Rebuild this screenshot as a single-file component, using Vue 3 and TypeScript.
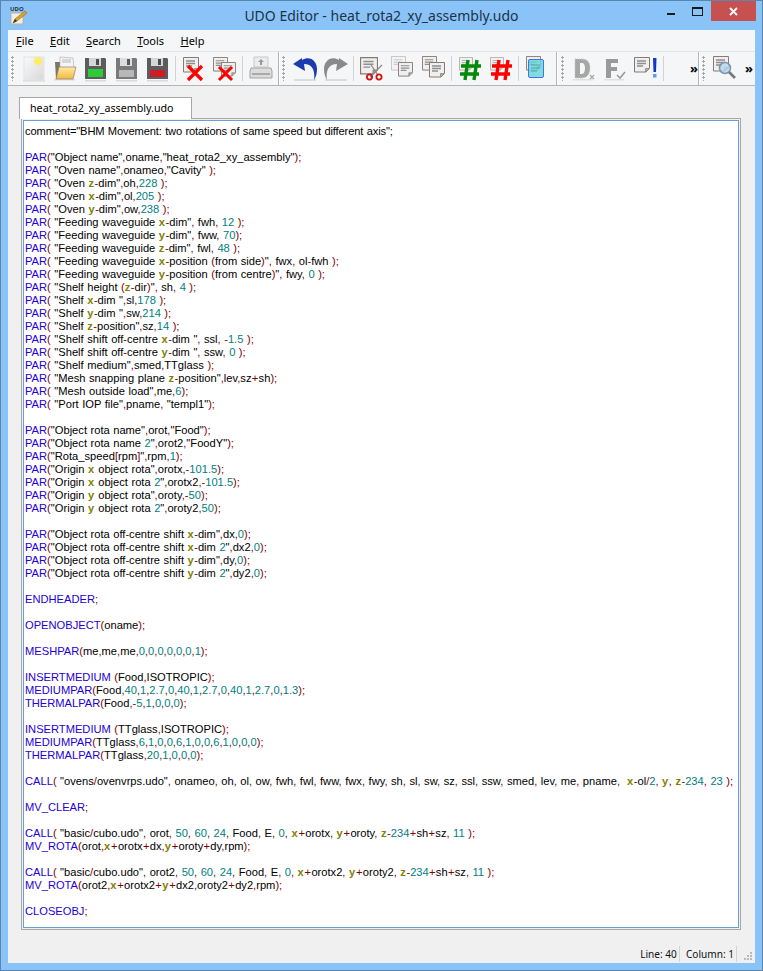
<script setup lang="ts">
const source = `comment="BHM Movement: two rotations of same speed but different axis";

PAR("Object name",oname,"heat_rota2_xy_assembly");
PAR( "Oven name",onameo,"Cavity" );
PAR( "Oven z-dim",oh,228 );
PAR( "Oven x-dim",ol,205 );
PAR( "Oven y-dim",ow,238 );
PAR( "Feeding waveguide x-dim", fwh, 12 );
PAR( "Feeding waveguide y-dim", fww, 70);
PAR( "Feeding waveguide z-dim", fwl, 48 );
PAR( "Feeding waveguide x-position (from side)", fwx, ol-fwh );
PAR( "Feeding waveguide y-position (from centre)", fwy, 0 );
PAR( "Shelf height (z-dir)", sh, 4 );
PAR( "Shelf x-dim ",sl,178 );
PAR( "Shelf y-dim ",sw,214 );
PAR( "Shelf z-position",sz,14 );
PAR( "Shelf shift off-centre x-dim ", ssl, -1.5 );
PAR( "Shelf shift off-centre y-dim ", ssw, 0 );
PAR( "Shelf medium",smed,TTglass );
PAR( "Mesh snapping plane z-position",lev,sz+sh);
PAR( "Mesh outside load",me,6);
PAR( "Port IOP file",pname, "templ1");

PAR("Object rota name",orot,"Food");
PAR("Object rota name 2",orot2,"FoodY");
PAR("Rota_speed[rpm]",rpm,1);
PAR("Origin x object rota",orotx,-101.5);
PAR("Origin x object rota 2",orotx2,-101.5);
PAR("Origin y object rota",oroty,-50);
PAR("Origin y object rota 2",oroty2,50);

PAR("Object rota off-centre shift x-dim",dx,0);
PAR("Object rota off-centre shift x-dim 2",dx2,0);
PAR("Object rota off-centre shift y-dim",dy,0);
PAR("Object rota off-centre shift y-dim 2",dy2,0);

ENDHEADER;

OPENOBJECT(oname);

MESHPAR(me,me,me,0,0,0,0,0,0,1);

INSERTMEDIUM (Food,ISOTROPIC);
MEDIUMPAR(Food,40,1,2.7,0,40,1,2.7,0,40,1,2.7,0,1.3);
THERMALPAR(Food,-5,1,0,0,0);

INSERTMEDIUM (TTglass,ISOTROPIC);
MEDIUMPAR(TTglass,6,1,0,0,6,1,0,0,6,1,0,0,0);
THERMALPAR(TTglass,20,1,0,0,0);

CALL( "ovens/ovenvrps.udo", onameo, oh, ol, ow, fwh, fwl, fww, fwx, fwy, sh, sl, sw, sz, ssl, ssw, smed, lev, me, pname,  x-ol/2, y, z-234, 23 );

MV_CLEAR;

CALL( "basic/cubo.udo", orot, 50, 60, 24, Food, E, 0, x+orotx, y+oroty, z-234+sh+sz, 11 );
MV_ROTA(orot,x+orotx+dx,y+oroty+dy,rpm);

CALL( "basic/cubo.udo", orot2, 50, 60, 24, Food, E, 0, x+orotx2, y+oroty2, z-234+sh+sz, 11 );
MV_ROTA(orot2,x+orotx2+y+dx2,oroty2+dy2,rpm);

CLOSEOBJ;`

interface Token {
  text: string
  kind: string
}

const keywords = new Set([
  'PAR', 'ENDHEADER', 'OPENOBJECT', 'MESHPAR', 'INSERTMEDIUM', 'MEDIUMPAR',
  'THERMALPAR', 'CALL', 'MV_CLEAR', 'MV_ROTA', 'CLOSEOBJ',
])

function tokenize(line: string): Token[] {
  if (line.startsWith('comment')) return [{ text: line, kind: 'comment' }]
  const parts = line.match(/[A-Za-z_][A-Za-z_0-9]*|\d+(?:\.\d+)?|\s+|./g) ?? []
  return parts.map((text) => {
    if (keywords.has(text)) return { text, kind: 'kw' }
    if (text === 'x' || text === 'y' || text === 'z') return { text, kind: 'axis' }
    if (/^\d/.test(text)) return { text, kind: 'num' }
    if (text === '+') return { text, kind: 'op plus' }
    if (/^[()\[\],;\-/=]$/.test(text)) return { text, kind: 'op' }
    return { text, kind: 'plain' }
  })
}

const lines = source.split('\n').map(tokenize)
const menus = [
  { key: 'F', rest: 'ile' },
  { key: 'E', rest: 'dit' },
  { key: 'S', rest: 'earch' },
  { key: 'T', rest: 'ools' },
  { key: 'H', rest: 'elp' },
]
</script>

<template>
  <div class="window">
    <svg class="defs" width="0" height="0" aria-hidden="true">
      <defs>
        <linearGradient id="pageFill" x1="0" y1="0" x2="1" y2="1">
          <stop offset="0" stop-color="#fafafa" />
          <stop offset="1" stop-color="#d8d8d8" />
        </linearGradient>
        <linearGradient id="folderFill" x1="0" y1="0" x2="0" y2="1">
          <stop offset="0" stop-color="#ffe9a8" />
          <stop offset="1" stop-color="#f6b83c" />
        </linearGradient>
        <symbol id="doc" viewBox="0 0 16 16">
          <path d="M.5.5h15v11l-3.500 3.500H.5z" fill="#efefef" stroke="#8d786e" />
          <path d="M3 4h9M3 6.500h9M3 9h6" stroke="#8e8e8e" stroke-width="1.300" />
          <path d="M11.500 15v-3.500H15" fill="#aaa" stroke="#8d786e" stroke-width=".7" />
        </symbol>
        <symbol id="disk" viewBox="0 0 24 24">
          <path d="M1 1h20l1 1v20H1z" fill="#5c5c5c" />
          <rect x="5" y="1" width="12" height="8" fill="#d6d6d6" />
          <rect x="12" y="2" width="3" height="6" fill="#4c4c4c" />
        </symbol>
      </defs>
    </svg>

    <header class="titlebar">
      <svg class="appicon" width="18" height="22" viewBox="0 0 18 22" aria-hidden="true">
        <path d="M1 8h12v11H1z" fill="#f2f0e6" stroke="#b9b39c" />
        <path d="M3 18l2-4L15 6l2 2L7 16z" fill="#d9a52c" stroke="#8a6a1a" stroke-width=".6" />
        <path d="M3 18l2-4 2 2z" fill="#333" />
      </svg>
      <span class="appmark">UDO</span>
      <h1 class="title">UDO Editor - heat_rota2_xy_assembly.udo</h1>
      <div class="controls">
        <span class="min"></span>
        <span class="max"></span>
        <span class="close">
          <svg width="9" height="9" viewBox="0 0 9 9" aria-hidden="true">
            <path d="M1 1l7 7M8 1L1 8" stroke="#fff" stroke-width="1.800" />
          </svg>
        </span>
      </div>
    </header>

    <div class="client">
      <nav class="menubar">
        <span v-for="m in menus" :key="m.key" class="menu"><u>{{ m.key }}</u>{{ m.rest }}</span>
      </nav>

      <div class="toolbar">
        <div class="group g1">
          <i class="grip"></i>
          <span class="btn">
            <svg width="24" height="26" viewBox="0 0 24 26" aria-hidden="true">
              <rect x="1" y="24" width="22" height="1.500" fill="#dadada" />
              <rect x="2" y="1" width="20" height="23" fill="url(#pageFill)" stroke="#e4e4e4" />
              <circle cx="16" cy="5" r="4.500" fill="#ffe94a" opacity=".55" />
              <circle cx="16" cy="5" r="2.600" fill="#fff04a" />
            </svg>
          </span>
          <span class="btn">
            <svg width="24" height="26" viewBox="0 0 24 26" aria-hidden="true">
              <rect x="1" y="23" width="21" height="1.500" fill="#dadada" />
              <path d="M2 6h6l1-2h4v19H3z" fill="#7d7468" />
              <path d="M7 1l13 1 1 10H7z" fill="#f5f5f5" stroke="#a8a8a8" stroke-width=".6" />
              <path d="M9 4h9M9 6h9" stroke="#b8b8b8" />
              <path d="M6 11h17l-3 12H3z" fill="url(#folderFill)" stroke="#8c8070" stroke-width=".7" />
            </svg>
          </span>
          <span class="btn">
            <svg width="24" height="26" viewBox="0 0 24 26" aria-hidden="true">
              <rect x="1" y="24" width="21" height="1.500" fill="#dadada" />
              <use href="#disk" width="24" height="24" x="0" y="1" />
              <rect x="4" y="13" width="15" height="8" fill="#2ecb36" />
            </svg>
          </span>
          <span class="btn">
            <svg width="24" height="26" viewBox="0 0 24 26" aria-hidden="true">
              <rect x="1" y="24" width="21" height="1.500" fill="#dadada" />
              <path d="M1 2h20l1 1v20H1z" fill="#7a7a7a" />
              <rect x="5" y="2" width="12" height="8" fill="#dedede" />
              <rect x="12" y="3" width="3" height="6" fill="#5a5a5a" />
              <rect x="4" y="14" width="15" height="7" fill="#b8b8b8" />
            </svg>
          </span>
          <span class="btn">
            <svg width="24" height="26" viewBox="0 0 24 26" aria-hidden="true">
              <rect x="1" y="24" width="21" height="1.500" fill="#dadada" />
              <use href="#disk" width="24" height="24" x="0" y="1" />
              <rect x="4" y="14" width="15" height="7" fill="#cf1c24" />
            </svg>
          </span>
          <i class="sep"></i>
          <span class="btn">
            <svg width="24" height="26" viewBox="0 0 24 26" aria-hidden="true">
              <use href="#doc" x="1" y="1" width="16" height="16" />
              <path d="M6 10l14 14M20 10L6 24" stroke="#f00" stroke-width="3.200" />
            </svg>
          </span>
          <span class="btn">
            <svg width="24" height="26" viewBox="0 0 24 26" aria-hidden="true">
              <use href="#doc" x="0" y="1" width="15" height="15" />
              <use href="#doc" x="8" y="6" width="15" height="15" />
              <path d="M6 11l13 13M19 11L6 24" stroke="#f00" stroke-width="3" />
            </svg>
          </span>
          <i class="sep"></i>
          <span class="btn">
            <svg width="24" height="26" viewBox="0 0 24 26" aria-hidden="true">
              <path d="M5 1h14v10H5z" fill="#ececec" stroke="#c8c8c8" />
              <path d="M12 3l3 3h-2v3h-2V6H9z" fill="#9a9a9a" />
              <path d="M2 12h20l1 3v7H1v-7z" fill="#dcdcdc" stroke="#a4a4a4" />
              <rect x="3" y="17" width="18" height="2" fill="#aaa" />
            </svg>
          </span>
        </div>

        <div class="group g2">
          <i class="grip"></i>
          <span class="btn">
            <svg width="26" height="28" viewBox="0 0 26 28" aria-hidden="true">
              <rect x="2" y="24" width="22" height="2" fill="#dcdcdc" />
              <path d="M1 9L10 3v2C18 0 25 6 25 14c0 4-1 8-3 11 1-7 0-16-10-16l1 7z" fill="#1c3cae" />
            </svg>
          </span>
          <span class="btn">
            <svg width="26" height="28" viewBox="0 0 26 28" aria-hidden="true">
              <rect x="2" y="24" width="22" height="2" fill="#dcdcdc" />
              <path d="M25 9L16 3v2C8 0 1 6 1 14c0 4 1 8 3 11-1-7 0-16 10-16l-1 7z" fill="#8a8a8a" />
            </svg>
          </span>
          <i class="sep"></i>
          <span class="btn">
            <svg width="24" height="26" viewBox="0 0 24 26" aria-hidden="true">
              <use href="#doc" x="0" y="1" width="18" height="18" />
              <path d="M22 9l-12 12M11 9l7 10" stroke="#8a8a8a" stroke-width="1.300" />
              <circle cx="9.500" cy="21" r="2.600" fill="none" stroke="#d01414" stroke-width="1.800" />
              <circle cx="19" cy="21" r="2.600" fill="none" stroke="#d01414" stroke-width="1.800" />
            </svg>
          </span>
          <span class="btn">
            <svg width="24" height="26" viewBox="0 0 24 26" aria-hidden="true">
              <g opacity=".4"><use href="#doc" x="0" y="0" width="15" height="15" /></g>
              <use href="#doc" x="7" y="6" width="15" height="15" />
            </svg>
          </span>
          <span class="btn">
            <svg width="24" height="26" viewBox="0 0 24 26" aria-hidden="true">
              <use href="#doc" x="0" y="0" width="15" height="15" />
              <use href="#doc" x="7" y="6" width="16" height="16" />
            </svg>
          </span>
          <i class="sep"></i>
          <span class="btn">
            <svg width="24" height="26" viewBox="0 0 24 26" aria-hidden="true">
              <g opacity=".6"><use href="#doc" x="1" y="1" width="14" height="14" /></g>
              <path d="M10 4L7 24M19 4l-3 20M3 10h20M2 18h19" stroke="#068a0a" stroke-width="3.400" />
            </svg>
          </span>
          <span class="btn">
            <svg width="24" height="26" viewBox="0 0 24 26" aria-hidden="true">
              <g opacity=".6"><use href="#doc" x="1" y="1" width="14" height="14" /></g>
              <path d="M10 4L7 24M19 4l-3 20M3 10h20M2 18h19" stroke="#f00" stroke-width="3.400" />
            </svg>
          </span>
          <i class="sep"></i>
          <span class="btn">
            <svg width="24" height="26" viewBox="0 0 24 26" aria-hidden="true">
              <use href="#doc" x="1" y="0" width="15" height="15" />
              <rect x="3.500" y="3.500" width="15" height="18" rx="1.500" fill="#5ed8d8" fill-opacity=".8" stroke="#4a6ef0" />
              <path d="M6 9h9M6 12h9M6 15h6" stroke="#5aa0a8" />
            </svg>
          </span>
        </div>

        <div class="group g3">
          <i class="grip"></i>
          <span class="btn">
            <svg width="24" height="26" viewBox="0 0 24 26" aria-hidden="true">
              <rect x="1" y="23" width="20" height="1.500" fill="#e0e0e0" />
              <path d="M3 3h7c5 0 8 3 8 9s-3 10-8 10H3z" fill="#a6a6a6" stroke="#c8c8c8" stroke-dasharray="1 1" />
              <path d="M8 7h2c2 0 3 2 3 5s-1 6-3 6H8z" fill="#f5f6f7" />
              <path d="M18 19l4 4M22 19l-4 4" stroke="#a8a8a8" stroke-width="1.200" />
            </svg>
          </span>
          <span class="btn">
            <svg width="24" height="26" viewBox="0 0 24 26" aria-hidden="true">
              <rect x="1" y="23" width="20" height="1.500" fill="#e0e0e0" />
              <path d="M3 3h12v4H8v4h6v4H8v7H3z" fill="#9a9a9a" />
              <path d="M14 19l3 3 5-6" fill="none" stroke="#9a9a9a" stroke-width="1.600" />
            </svg>
          </span>
          <span class="btn">
            <svg width="24" height="26" viewBox="0 0 24 26" aria-hidden="true">
              <use href="#doc" x="0" y="1" width="16" height="16" />
              <path d="M19 2h3.500l-.5 14h-2.500z" fill="#1238c8" />
              <rect x="19" y="18" width="3.500" height="3.500" fill="#5c9cf0" />
            </svg>
          </span>
          <i class="sep"></i>
          <span class="more">»</span>
        </div>

        <div class="group g4">
          <i class="grip"></i>
          <span class="btn">
            <svg width="24" height="26" viewBox="0 0 24 26" aria-hidden="true">
              <use href="#doc" x="0" y="0" width="16" height="16" />
              <circle cx="12" cy="12" r="5.500" fill="#b8d4f0" fill-opacity=".8" stroke="#7a94b0" stroke-width="1.500" />
              <path d="M16 16l6 6" stroke="#77777c" stroke-width="2.600" />
            </svg>
          </span>
          <span class="more">»</span>
        </div>
      </div>

      <main class="body">
        <div class="tab">heat_rota2_xy_assembly.udo</div>
        <div class="editor">
          <pre class="code"><div v-for="(line, i) in lines" :key="i" class="line"><span v-for="(t, j) in line" :key="j" :class="t.kind">{{ t.text }}</span></div></pre>
        </div>
      </main>

      <footer class="status">
        <span class="cell">Line: 40</span>
        <span class="cell">Column: 1</span>
        <svg class="sizer" width="8" height="8" viewBox="0 0 8 8" aria-hidden="true">
          <path d="M6 0h2v2H6zM3 3h2v2H3zM6 3h2v2H6zM0 6h2v2H0zM3 6h2v2H3zM6 6h2v2H6z" fill="#b8b8b8" />
        </svg>
      </footer>
    </div>
  </div>
</template>

<style>
html,
body {
  margin: 0;
  overflow: hidden;
}
</style>

<style scoped>
.window {
  box-sizing: border-box;
  width: 763px;
  height: 971px;
  display: flex;
  flex-direction: column;
  padding: 0 7px 7px;
  background: #8ac3f8;
  border: 1px solid #5a86ae;
  font-family: "Noto Sans", sans-serif;
  color: #000;
}
.defs {
  position: absolute;
}
.titlebar {
  position: relative;
  height: 29px;
  flex: none;
  display: flex;
  align-items: center;
  justify-content: center;
}
.appicon {
  position: absolute;
  left: 2px;
  top: 4px;
}
.appmark {
  position: absolute;
  left: 2px;
  top: 5px;
  font-size: 6px;
  line-height: 7px;
  font-weight: 700;
  color: #333;
}
.title {
  margin: 0;
  font-size: 14px;
  font-weight: 400;
  color: #1c3347;
}
.controls {
  position: absolute;
  top: 0;
  right: -1px;
  display: flex;
  align-items: flex-start;
}
.min {
  width: 8px;
  height: 2px;
  background: #1a1a1a;
  margin: 12px 17px 0 0;
}
.max {
  box-sizing: border-box;
  width: 11px;
  height: 9px;
  border: 1px solid #1a1a1a;
  border-top-width: 2px;
  margin: 6px 8px 0 0;
}
.close {
  width: 45px;
  height: 20px;
  background: #c75050;
  display: flex;
  align-items: center;
  justify-content: center;
}
.client {
  flex: 1;
  min-height: 0;
  display: flex;
  flex-direction: column;
  background: #f0f0f0;
}
.menubar {
  box-sizing: border-box;
  height: 22px;
  flex: none;
  display: flex;
  align-items: center;
  padding-left: 8px;
  background: #f5f6f7;
  border-bottom: 1px solid #e4e4e4;
  font-size: 11px;
}
.menu {
  margin-right: 16.400px;
}
.toolbar {
  box-sizing: border-box;
  height: 34px;
  flex: none;
  display: flex;
  background: #f5f6f7;
  border-bottom: 1px solid #b4b4b4;
}
.group {
  box-sizing: border-box;
  display: flex;
  align-items: center;
  border-right: 1px solid #b4b4b4;
  box-shadow: 1px 0 0 #fff;
  padding-left: 2px;
}
.g1 {
  width: 271px;
}
.g2 {
  width: 278px;
}
.g3 {
  width: 142px;
  padding-left: 3px;
}
.g4 {
  flex: 1;
  border-right: 0;
  box-shadow: none;
}
.grip {
  width: 6px;
  height: 25px;
  margin-right: 2px;
  flex: none;
  background-image: radial-gradient(circle at 1.500px 1.500px, #a8a8a8 1.100px, transparent 1.200px);
  background-size: 3px 4px;
  background-repeat: repeat-y;
  background-position: 1px 0;
}
.btn {
  width: 31px;
  height: 30px;
  flex: none;
  display: flex;
  align-items: center;
  justify-content: center;
}
.btn svg {
  filter: blur(0.350px);
}
.sep {
  width: 5px;
  height: 25px;
  flex: none;
  background: linear-gradient(#d2d2d2, #d2d2d2) no-repeat 2px 0 / 1px 100%;
}
.more {
  margin-left: 24px;
  font-size: 13px;
  font-weight: 700;
  line-height: 1;
}
.g4 .more {
  margin-left: 5px;
}
.body {
  flex: none;
  display: flex;
  flex-direction: column;
  padding: 11px 14px 0 11px;
}
.tab {
  box-sizing: border-box;
  width: 173px;
  height: 22px;
  margin-bottom: -1px;
  position: relative;
  z-index: 1;
  padding-left: 10px;
  background: #fff;
  border: 1px solid #a8a8a8;
  border-bottom: 0;
  font-size: 10.700px;
  line-height: 21px;
  white-space: nowrap;
}
.editor {
  box-sizing: border-box;
  height: 812px;
  margin-left: 2px;
  background: #f0f0f0;
  border: 1px solid #a8a8a8;
  padding: 1px;
}
.code {
  box-sizing: border-box;
  height: 100%;
  margin: 0;
  padding: 4px 0 0 1px;
  background: #fff;
  border: 1px solid #6f9fd0;
  font-family: "Liberation Sans", sans-serif;
  font-size: 11.150px;
  line-height: 13px;
  word-spacing: 0.400px;
  white-space: pre;
  overflow: hidden;
}
.line {
  height: 13px;
}
.comment {
  color: #000;
  letter-spacing: -0.130px;
}
.kw {
  color: #2400d8;
}
.axis {
  color: #808000;
  font-weight: 700;
  letter-spacing: 0.500px;
}
.num {
  color: #008080;
}
.op {
  color: #800000;
}
.plus {
  margin: 0 0.300px;
}
.plain {
  color: #000;
}
.status {
  flex: 1;
  display: flex;
  align-items: flex-end;
  justify-content: flex-end;
  position: relative;
  padding: 0 18px 1px 0;
  font-size: 10.100px;
}
.cell {
  padding: 0 2px 0 6px;
  border-right: 1px solid #d4d4d4;
  line-height: 16px;
  color: #111;
}
.sizer {
  position: absolute;
  right: 3px;
  bottom: 3px;
}
</style>
